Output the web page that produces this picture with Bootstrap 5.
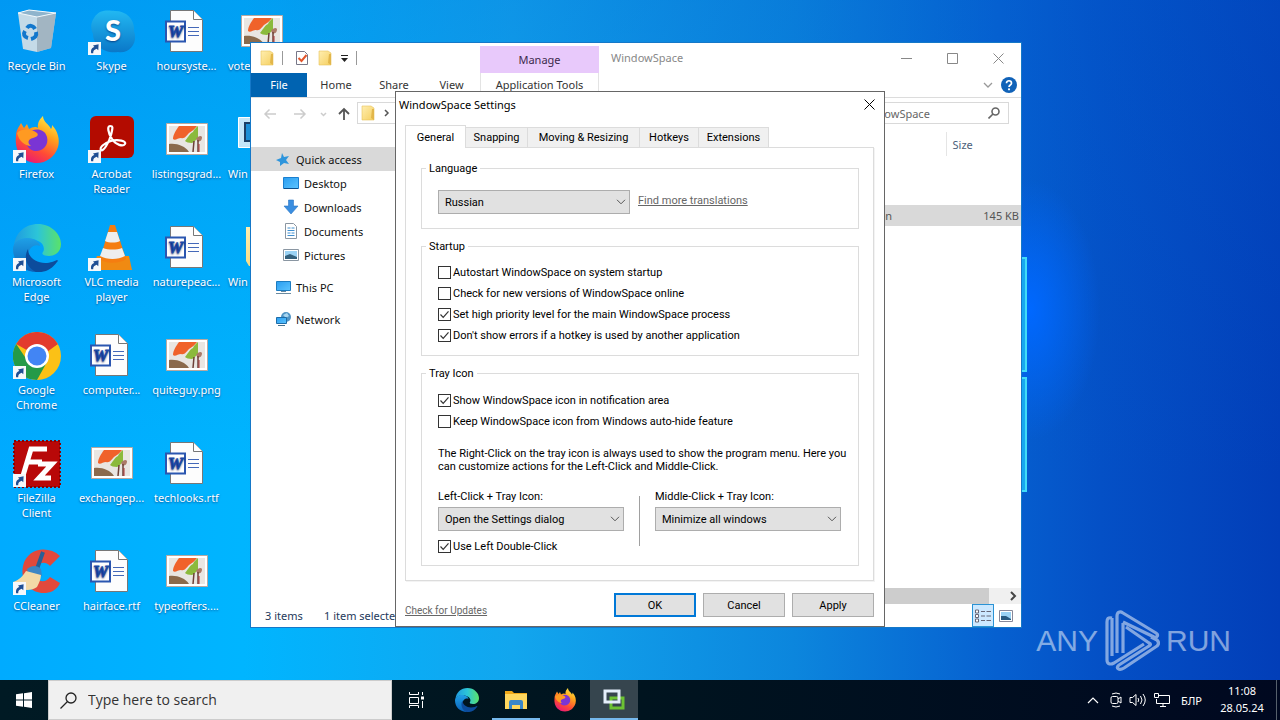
<!DOCTYPE html>
<html lang="en">
<head>
<meta charset="utf-8">
<meta name="viewport" content="width=device-width, initial-scale=1">
<title>WindowSpace Settings</title>
<link href="https://cdn.jsdelivr.net/npm/bootstrap@5.3.0/dist/css/bootstrap.min.css" rel="stylesheet">
<style>
:root{--ui:"Noto Sans","Open Sans",sans-serif;--dlg:Roboto,"Liberation Sans",sans-serif}
body{font:11px/15px var(--ui);color:#222;background:#0450c8;overflow:hidden}
svg{display:block;flex:none}
button{color:inherit}
.plain{background:none;border:0;padding:0}
.desktop{background:
  radial-gradient(ellipse 70px 130px at 1030px 310px,#0068ff 0,#0068ff00 100%),
  linear-gradient(180deg,#0060d040 0,#0060d000 70%),
  linear-gradient(90deg,#00abff 0,#00b5ff 19%,#12a6ee 40%,#0c86dd 62%,#0660d0 78%,#0450c6 86%,#023eb8 100%)}
/* desktop shortcuts */
.shortcuts{display:grid;grid-auto-flow:column;grid-template-rows:repeat(6,108px);grid-auto-columns:75px;width:max-content}
.shortcut{color:#fff;text-decoration:none;text-align:center;padding:8px 2px 0 0;white-space:nowrap;text-shadow:0 1px 2px #0048}
.shortcut svg{margin:0 auto 2px}
.shortcut.under{text-align:left;padding-left:3px}
.shortcut.under svg{margin-left:10px}
/* glowing panes of the wallpaper */
.panes{left:1000px;top:257px;width:27px}
.panes i{display:block;height:115px;margin-bottom:5px;background:#18a8f0;border:2px solid #40dcf8}
/* explorer */
.explorer{left:250px;top:42px;width:772px;height:586px;background:#fff;border:1px solid #1578c8}
.titlebar{height:30px;line-height:14px}
.quick{width:229px;gap:7px;padding-left:8px}
.vline{width:1px;height:14px;background:#999}
.manage{width:119px;background:#e8c9fb;margin-top:3px;color:#3c2a4c}
.ribbon{height:25px;border-bottom:1px solid #dcdcdc}
.ribbon a{color:#333;text-decoration:none;text-align:center;padding-top:4px}
.ribbon .file{background:#0063b1;color:#fff;width:56px}
.ribbon .tools{width:119px;border:solid #e3e3e3;border-width:0 1px}
.wbtn{width:46px;height:30px;display:flex;justify-content:center;align-items:center}
.field{height:22px;border:1px solid #d9d9d9;background:#fff}
.field input{border:0;outline:0;font:inherit;padding:0;width:140px;color:#666}
.field input::placeholder{color:#666;opacity:1}
.places{width:150px;flex:none}
.places a{height:24px;display:flex;align-items:center;color:#111;text-decoration:none;padding-left:32px;gap:5px}
.places a.first{background:#d9d9d9;padding-left:25px}
.places a.top-level{padding-left:24px;margin-top:8px;gap:4px}
.files{width:100%;margin-top:2px;color:#555}
.files th{font-weight:400;color:#4c607a;height:24px;border-right:1px solid #e5e5e5;padding:0 6px}
.files td{height:21px;padding:0 2px 0 6px}
.files .gap td{height:49px}
.files .picked{background:#d9d9d9}
.hscroll{height:16px;background:#f0f0f0}
.hscroll .thumb{background:#cdcdcd;width:588px}
.status{height:23px;padding:0 8px 0 14px;color:#1e395b;gap:5px}
.viewsel{width:22px;height:23px;background:#cce8ff;border:1px solid #2a93d5;display:flex;align-items:center;justify-content:center}
/* settings dialog */
.dialog{left:395px;top:91px;width:490px;height:536px;background:#fff;border:1px solid #666;font:11px/13px var(--dlg);color:#000;padding:0 10px 0 9px}
.caption{height:24px;margin:0 -5px 0 -6px;font:11px/15px var(--ui)}
.tabs{height:31px;align-items:flex-end}
.tabs button{background:#f0f0f0;border:1px solid #dcdcdc;border-width:1px 1px 0 0;height:20px;padding:0;white-space:nowrap;flex:none;text-align:center}
.tabs button.on{background:#fff;width:61px;height:23px;border-left-width:1px;margin-bottom:-1px;position:relative}
.pane{border:1px solid #dcdcdc;padding:14px 14px 14px 15px;box-shadow:1px 1px 0 #f3f3f3}
.group{border:1px solid #dcdcdc;margin:0 0 11px;padding:0 16px}
.group:last-child{margin:0}
.group legend{float:none;width:auto;font:inherit;margin:0 0 0 -12px;padding:0 3px}
.pick{height:24px;background:#e1e1e1 url("data:image/svg+xml,%3Csvg xmlns='http://www.w3.org/2000/svg' viewBox='0 0 10 6'%3E%3Cpath d='M1 .8l4 4 4-4' fill='none' stroke='%23555'/%3E%3C/svg%3E") no-repeat right 3px center/10px 6px;border:1px solid #adadad;border-radius:0;padding:0 6px;font:inherit;color:#000;appearance:none;width:186px}
.pick.wide{width:192px}
.tick{height:21px;display:flex;align-items:center;gap:2px;white-space:nowrap}
.tick input{appearance:none;width:13px;height:13px;border:1px solid #333;margin:0;background:#fff;flex:none}
.tick input:checked{background:#fff url("data:image/svg+xml,%3Csvg xmlns='http://www.w3.org/2000/svg' viewBox='0 0 11 11'%3E%3Cpath d='M1.5 5.5l2.7 2.8 5.3-6' fill='none' stroke='%23333' stroke-width='1.2'/%3E%3C/svg%3E")}
.soft{color:#666;text-decoration:underline}
.push{width:82px;height:24px;background:#e1e1e1;border:1px solid #adadad;padding:0}
.push.main{border:2px solid #0078d7}
.divider{width:1px;height:50px;background:#a0a0a0;margin:6px 15px 0}
/* watermark and taskbar */
.mark-any{right:49px;bottom:8px;color:#fff;opacity:.5;font:30px/62px "Liberation Sans",sans-serif;gap:6px}
.taskbar{height:40px;background:linear-gradient(90deg,#001a24,#00141f 50%,#000820);color:#fff}
.find{width:344px;background:#f0f0f0;border:1px solid #ccc;padding-left:11px;gap:11px}
.find input{background:none;border:0;outline:0;padding:0;width:250px;font:14px/20px "Open Sans",sans-serif;color:#333}
.find input::placeholder{color:#333;opacity:1}
.tb{width:48px;height:40px;display:flex;align-items:center;justify-content:center;flex:none}
.tb.open{box-shadow:inset 0 -2px #76b9ed}
.tb.on{background:#36454e}
.tray{gap:6px}
.clock{width:68px;text-align:center;line-height:17px;margin-top:-2px}
.peek{width:4px;border-left:1px solid #56606c}
</style>
</head>
<body class="vh-100 d-flex flex-column">
<svg width="0" height="0" class="position-absolute" aria-hidden="true">
  <defs>
    <linearGradient id="gEdge" x1="0" y1="0" x2="1" y2="0"><stop offset="0" stop-color="#1f9be0"/><stop offset=".5" stop-color="#2cc5d8"/><stop offset="1" stop-color="#5be268"/></linearGradient>
    <linearGradient id="gEdge2" x1="0" y1="0" x2="0" y2="1"><stop offset="0" stop-color="#1fa0e6"/><stop offset="1" stop-color="#0b60b8"/></linearGradient>
    <linearGradient id="gFox" x1=".8" y1="0" x2=".3" y2="1"><stop offset="0" stop-color="#fff04a"/><stop offset=".35" stop-color="#ffa41c"/><stop offset=".7" stop-color="#ff4a36"/><stop offset="1" stop-color="#e81878"/></linearGradient>
    <linearGradient id="gFold" x1="0" y1="0" x2="1" y2="1"><stop offset="0" stop-color="#ffeeb0"/><stop offset="1" stop-color="#f5cf60"/></linearGradient>
    <linearGradient id="gSky" x1="0" y1="0" x2="0" y2="1"><stop offset="0" stop-color="#22b8f2"/><stop offset="1" stop-color="#0a78c8"/></linearGradient>
    <linearGradient id="gScr" x1="0" y1="0" x2="1" y2="1"><stop offset="0" stop-color="#2a9df0"/><stop offset="1" stop-color="#5cc4ff"/></linearGradient>
  </defs>
  <symbol id="jump" viewBox="0 0 13 13"><path d="M0 0h13v13H0z" fill="#f5f8fb"/><path d="M3.2 11.200C2.500 7.500 4 5.500 6.400 5L5 3.400 10.600 2.200 10.300 8.200 8.600 6.800C6.500 7.600 5 8.600 5.200 11.200z" fill="#1f4f94"/></symbol>
  <symbol id="word" viewBox="0 0 48 48"><path d="M7.500 2.500h23l9 9v32h-32z" fill="#fdfdfd" stroke="#777"/><path d="M30.500 2.500v9h9" fill="#fff" stroke="#777"/><path d="M25 19.500h11M25 23.500h11M25 27.500h11" stroke="#4468b8"/><path d="M3 13.500h19v20H3z" fill="#fff" stroke="#2b56b0" stroke-width="2"/><text x="12.500" y="29" text-anchor="middle" font-family="Liberation Serif,serif" font-weight="700" font-style="italic" font-size="17" fill="#1c4aa8" stroke="#1c4aa8" stroke-width=".8">W</text></symbol>
  <symbol id="photo" viewBox="0 0 48 48"><path d="M3.500 7.500h41v31h-41z" fill="#fff" stroke="#b8a8a0"/><path d="M6 10h36v26H6z" fill="#e9e6e2"/><path d="M16 10h18c-2 3-5 5-8 7-3 3-4 6-8 5-3 0-6 3-8 1 0-4 3-9 6-13z" fill="#f0622a"/><path d="M35 10v12c-2 1-3 4-6 5-3 0-6-1-7-2 3-3 4-7 8-9 1-3 3-4 5-6z" fill="#8bba3c"/><path d="M6 28c8-1 16 2 20 8H6z" fill="#8b6a4c"/><path d="M33 23c2-3 5-4 6-2 0 4-2 4-4 5z" fill="#ab7a68"/><path d="M31 25l-1 11M35 24v12" stroke="#6d4038" stroke-width="1.500"/><path d="M36 28v8" stroke="#a33" /></symbol>
  <symbol id="edge" viewBox="0 0 48 48"><path d="M1 22C2 9 12 0 25 0c13 0 23 10 23 20 0 8-6 12-12 12-5 0-8-2-6-4 2-2 1-9-5-11C15 12 3 15 1 22z" fill="url(#gEdge)"/><path d="M0 25c0-7 7-11 14-11 8 0 13 5 13 8-6-3-13 3-12 12 1 7 5 11 9 14C10 48 0 38 0 25z" fill="url(#gEdge2)"/><path d="M23 48C14 44 10 34 15 25c0 8 8 14 17 14 6 0 9-2 12-3 1 0 1 1 0 2-5 7-12 11-21 10z" fill="#0c4c9c"/></symbol>
  <symbol id="fox" viewBox="0 0 48 48"><path d="M3 20C3 14 6 11 8 7l3 5 3-4 2 5c3-2 7-3 9-1C24 6 28 2 30 0c0 6 6 8 8 13 1-1 1-3 1-4 6 6 8 15 6 22-3 10-12 16-21 16C12 47 1 38 3 20z" fill="url(#gFox)"/><path d="M15 18c4-6 16-7 19 3 2 8-4 14-11 14-9 0-12-10-8-17z" fill="#7a35d4"/><path d="M4 17c5-5 15-4 20 0 2 2 0 4-4 5-5 1-6 5-2 8-6 0-12-5-14-13z" fill="#ff9a22"/></symbol>
  <symbol id="folder" viewBox="0 0 16 16"><path d="M2 1h9l3 2v12H2z" fill="url(#gFold)" stroke="#e8c35c" stroke-width=".6"/><path d="M12 4h2v11l-3-2z" fill="#e2b64a"/></symbol>
</svg>

<main class="desktop flex-grow-1 position-relative overflow-hidden">
  <nav class="shortcuts" aria-label="Desktop">
    <a class="shortcut" href="#"><svg width="48" height="48"><path d="M5 5l11-3 27 3-5 35-14 4-14-3z" fill="#cfdde6" opacity=".95"/><path d="M24 9v35l14-4 5-35z" fill="#9aabb9" opacity=".8"/><path d="M5 5l11-3 27 3-19 4z" fill="#8fb4cc" stroke="#f2f8fb"/><g fill="none" stroke="#1277cc" stroke-width="4"><path d="M14 20c2-3 6-3 8 1"/><path d="M23 24c1 4-1 6-5 7"/><path d="M15 30c-4-1-5-4-3-7"/></g></svg>Recycle Bin</a>
    <a class="shortcut" href="#"><svg width="48" height="48"><use href="#fox"/><use href="#jump" y="34" width="13" height="13"/></svg>Firefox</a>
    <a class="shortcut" href="#"><svg width="48" height="48"><use href="#edge"/><use href="#jump" y="34" width="13" height="13"/></svg>Microsoft<br>Edge</a>
    <a class="shortcut" href="#"><svg width="48" height="48"><circle cx="24" cy="24" r="24" fill="#fbc116"/><path d="M24 24L3.200 12A24 24 0 0 1 44.800 12z" fill="#e33b2e"/><path d="M3.200 12A24 24 0 0 0 24 48L34 30 14 28z" fill="#249a48"/><path d="M24 12h20.800L34 20z" fill="#e33b2e"/><circle cx="24" cy="24" r="12" fill="#fff"/><circle cx="24" cy="24" r="9.500" fill="#4285f4"/><use href="#jump" y="34" width="13" height="13"/></svg>Google<br>Chrome</a>
    <a class="shortcut" href="#"><svg width="48" height="48"><path d="M1 1h46v46H1z" fill="#b80808" stroke="#8a0000" stroke-width="2" stroke-dasharray="2 2"/><g fill="none" stroke="#fff" stroke-width="5"><path d="M34 9H18L9 39M14 22h15M25 24h14L26 38h12"/></g><use href="#jump" y="34" width="13" height="13"/></svg>FileZilla<br>Client</a>
    <a class="shortcut" href="#"><svg width="48" height="48"><path d="M47 8C35-3 14 0 10 18c-4 20 14 32 30 25 3-2 6-5 7-8l-10-6c-5 7-14 5-15-4 0-9 9-14 15-7z" fill="#e2493c"/><path d="M30 4l-6 17" stroke="#285f96" stroke-width="4"/><path d="M14 21c5-4 10-4 14 0l1 7-14-3z" fill="#3d86c4"/><path d="M13 23l15 4c0 4-2 8-4 12-4 3-10 4-16 2L0 34c6-2 10-6 13-11z" fill="#f3d9a6"/><use href="#jump" y="34" width="13" height="13"/></svg>CCleaner</a>
    <a class="shortcut" href="#"><svg width="48" height="48"><path d="M6 10C12 0 22 3 27 3c12 0 20 9 19 20 4 10-3 23-16 21C16 46 5 37 5 26 2 20 3 14 6 10z" fill="url(#gSky)"/><text x="25" y="33" text-anchor="middle" font-family="Lato,sans-serif" font-weight="900" font-size="29" fill="#fff">S</text><use href="#jump" y="34" width="13" height="13"/></svg>Skype</a>
    <a class="shortcut" href="#"><svg width="48" height="48"><rect x="2" y="0" width="44" height="42" rx="6" fill="#b30b00"/><path d="M22 10c-3 0-2 7 2 13s11 8 13 5-7-5-14-3-12 7-10 9 8-7 10-15 2-9-1-9z" fill="none" stroke="#fff" stroke-width="2.200"/><use href="#jump" y="34" width="13" height="13"/></svg>Acrobat<br>Reader</a>
    <a class="shortcut" href="#"><svg width="48" height="48"><path d="M9 32h32l3 14H4z" fill="#f08a12"/><path d="M22 1h5l11 34c-6 5-21 5-26 0z" fill="#f57d10"/><path d="M20 8h9l3 9c-4 2-11 2-15 0z" fill="#eee"/><path d="M15 24c5 2 14 2 19 0l3 8c-7 4-18 4-25 0z" fill="#eee"/><use href="#jump" y="34" width="13" height="13"/></svg>VLC media<br>player</a>
    <a class="shortcut" href="#"><svg width="48" height="48"><use href="#word"/></svg>computer...</a>
    <a class="shortcut" href="#"><svg width="48" height="48"><use href="#photo"/></svg>exchangep...</a>
    <a class="shortcut" href="#"><svg width="48" height="48"><use href="#word"/></svg>hairface.rtf</a>
    <a class="shortcut" href="#"><svg width="48" height="48"><use href="#word"/></svg>hoursyste...</a>
    <a class="shortcut" href="#"><svg width="48" height="48"><use href="#photo"/></svg>listingsgrad...</a>
    <a class="shortcut" href="#"><svg width="48" height="48"><use href="#word"/></svg>naturepeac...</a>
    <a class="shortcut" href="#"><svg width="48" height="48"><use href="#photo"/></svg>quiteguy.png</a>
    <a class="shortcut" href="#"><svg width="48" height="48"><use href="#word"/></svg>techlooks.rtf</a>
    <a class="shortcut" href="#"><svg width="48" height="48"><use href="#photo"/></svg>typeoffers....</a>
    <a class="shortcut under" href="#"><svg width="48" height="48"><use href="#photo"/></svg>vote</a>
    <a class="shortcut under" href="#"><svg width="48" height="48"><path d="M.5 1.500h40v30H.500z" fill="#c4e6f8" stroke="#fff"/><path d="M7 7h20v18H7z" fill="#1c8fd6" stroke="#1b3f66" stroke-width="2"/></svg>Win</a>
    <a class="shortcut under" href="#"><svg width="48" height="48"><path d="M8 3h28l6 5v34H11l-3-5z" fill="url(#gFold)"/></svg>Win</a>
  </nav>
  <div class="panes position-absolute" aria-hidden="true"><i></i><i></i></div>

  <section class="explorer position-absolute d-flex flex-column" aria-label="WindowSpace folder">
    <div class="titlebar d-flex">
      <div class="quick d-flex align-items-center">
        <svg width="16" height="16"><use href="#folder"/></svg><span class="vline"></span>
        <svg width="16" height="16" class="ms-1"><path d="M2.500 1.500h8l3 3v10h-11z" fill="#fff" stroke="#778"/><path d="M4.500 8l3 3 5-6" fill="none" stroke="#e2562c" stroke-width="2"/></svg>
        <svg width="16" height="16"><use href="#folder"/></svg>
        <svg width="9" height="9"><path d="M1 1.500h7" stroke="#222"/><path d="M1 4h7L4.500 8z" fill="#222"/></svg><span class="vline"></span>
      </div>
      <div class="manage d-flex align-items-center justify-content-center">Manage</div>
      <div class="d-flex align-items-center ps-2 flex-grow-1 ms-1" style="color:#888">WindowSpace</div>
      <button class="plain wbtn" aria-label="Minimize"><svg width="11" height="11"><path d="M0 5.500h11" stroke="#888"/></svg></button>
      <button class="plain wbtn" aria-label="Maximize"><svg width="11" height="11"><path d="M.5.500h10v10H.500z" fill="none" stroke="#888"/></svg></button>
      <button class="plain wbtn" aria-label="Close"><svg width="11" height="11"><path d="M.5.500l10 10m0-10l-10 10" stroke="#888"/></svg></button>
    </div>
    <div class="ribbon d-flex">
      <a class="file" href="#">File</a><a href="#" style="width:58px">Home</a><a href="#" style="width:58px">Share</a><a href="#" style="width:57px">View</a><a class="tools" href="#">Application Tools</a>
      <div class="ms-auto d-flex align-items-center gap-2 pe-1"><svg width="10" height="7"><path d="M1 1l4 4 4-4" fill="none" stroke="#999" stroke-width="1.300"/></svg>
      <svg width="16" height="16"><circle cx="8" cy="8" r="8" fill="#1062b8"/><path d="M5.500 6.200c0-3.300 5-3.200 5 0C10.500 8 8 8 8 10" fill="none" stroke="#fff" stroke-width="1.700"/><circle cx="8" cy="12.300" r="1.100" fill="#fff"/></svg></div>
    </div>
    <div class="d-flex align-items-center mt-1 pe-2 me-1">
      <svg width="106" height="20" fill="none" stroke-width="1.500"><g stroke="#ccc"><path d="M25 11H14m4.500-4.500L14 11l4.500 4.500"/><path d="M43 11h11m-4.500-4.500L54 11l-4.500 4.500"/><path d="M70 10l2.500 2.500L75 10"/></g><path d="M93 17V6m-5 5l5-5 5 5" stroke="#555" stroke-width="1.800"/></svg>
      <div class="field d-flex align-items-center gap-2" style="width:440px;padding-left:2px"><svg width="16" height="16"><use href="#folder"/></svg><svg width="6" height="8"><path d="M1 1l3 3-3 3" fill="none" stroke="#555" stroke-width="1.500"/></svg></div>
      <label class="field d-flex align-items-center justify-content-between ms-auto pe-2" style="width:206px;padding-left:16px"><input type="search" placeholder="Search WindowSpace" aria-label="Search folder"><svg width="12" height="12" fill="none" stroke="#666" stroke-width="1.600"><circle cx="7.500" cy="4.500" r="3.500"/><path d="M5 7L.500 11.500"/></svg></label>
    </div>
    <div class="d-flex flex-grow-1" style="padding-top:23px">
      <nav class="places" aria-label="Places">
        <a class="first" href="#"><svg width="15" height="15"><path d="M6 1l2 4 5-1-3 4 3 4-5-1-4 3 0-4-4-2 5-2z" fill="#2e95dc"/></svg>Quick access</a>
        <a href="#"><svg width="16" height="14"><path d="M.5 1.500h15v11H.500z" fill="url(#gScr)" stroke="#1a7fd0"/><path d="M1 12.500h14" stroke="#0c4f8c"/></svg>Desktop</a>
        <a href="#"><svg width="16" height="16"><path d="M5.500 1h5v6H15l-7 8-7-8h4.500z" fill="#3a8ee0" stroke="#2a76c4" stroke-width=".6"/></svg>Downloads</a>
        <a href="#"><svg width="16" height="16"><path d="M2.500.500h8l3 3v12h-11z" fill="#fff" stroke="#8a96a2"/><path d="M4.500 5h3m1 0h3M4.500 7.500h7m-7 2.500h3m1 0h3m-7 2.500h7" stroke="#3f8fd0"/></svg>Documents</a>
        <a href="#"><svg width="16" height="14"><path d="M.5 1.500h15v11H.500z" fill="#fff" stroke="#8a96a2"/><path d="M2 3h12v8H2z" fill="#9ad2f4"/><path d="M2 8l5-2 7 3v2H2z" fill="#33607c"/></svg>Pictures</a>
        <a class="top-level" href="#"><svg width="17" height="16"><path d="M1.500 2.500h14v9h-14z" fill="url(#gScr)" stroke="#1d7cc0"/><path d="M1 14.500h15M6 12.500h5" stroke="#6a8aa0"/></svg>This PC</a>
        <a class="top-level" href="#"><svg width="17" height="16"><circle cx="11" cy="6" r="5" fill="#4f93c4"/><path d="M8 4l4-2 2 3-3 2z" fill="#a9d5ee"/><path d="M1.500 6.500h10v6h-10z" fill="url(#gScr)" stroke="#1d6ca8"/><path d="M3 14.500h7" stroke="#48718c"/></svg>Network</a>
      </nav>
      <div class="flex-grow-1 d-flex flex-column justify-content-between" style="margin-top:-17px">
        <table class="files">
          <thead><tr><th style="width:350px">Name</th><th>Type</th><th style="width:75px;border:0">Size</th></tr></thead>
          <tbody><tr class="gap"><td></td><td></td><td></td></tr>
          <tr class="picked"><td>WindowSpace</td><td><div class="text-end pe-5 me-1">Application</div></td><td class="text-end">145 KB</td></tr></tbody>
        </table>
        <div class="hscroll d-flex align-items-center justify-content-between pe-1"><span class="thumb h-100"></span><svg width="8" height="10"><path d="M2 1l4 4-4 4" fill="none" stroke="#444" stroke-width="2"/></svg></div>
      </div>
    </div>
    <div class="status d-flex align-items-center"><span style="width:54px">3 items</span><span>1 item selected</span>
      <button class="plain viewsel ms-auto" aria-label="Details"><svg width="16" height="14"><path d="M.5 1h3v3h-3zm0 4.500h3v3h-3zM.5 10h3v3h-3z" fill="#fff" stroke="#667"/><path d="M6 2.500h4m1.500 0H16M6 7h4m1.500 0H16M6 11.500h4m1.500 0H16" stroke="#667"/></svg></button>
      <button class="plain" aria-label="Large icons"><svg width="14" height="12"><path d="M.5.500h13v11H.500z" fill="#fff" stroke="#889"/><path d="M2 2h10v8H2z" fill="#9ad2f4"/><path d="M2 6l5 0 5 3v1H2z" fill="#285a80"/></svg></button>
    </div>
  </section>

  <section class="dialog position-absolute" role="dialog" aria-label="WindowSpace Settings">
    <div class="caption d-flex align-items-center justify-content-between"><span>WindowSpace Settings</span><button class="plain px-1" aria-label="Close"><svg width="11" height="11"><path d="M.5.500l10 10m0-10l-10 10" stroke="#000"/></svg></button></div>
    <div class="tabs d-flex" role="tablist"><button class="on" role="tab">General</button><button role="tab" style="width:62px">Snapping</button><button role="tab" style="width:112px">Moving &amp; Resizing</button><button role="tab" style="width:59px">Hotkeys</button><button role="tab" style="width:70px">Extensions</button></div>
    <div class="pane">
      <fieldset class="group"><legend>Language</legend>
        <div class="d-flex gap-2" style="padding:15px 0 14px"><select class="pick wide" aria-label="Language"><option>Russian</option></select><a class="soft pt-1" href="#">Find more translations</a></div>
      </fieldset>
      <fieldset class="group"><legend>Startup</legend>
        <div style="padding:9px 0">
          <label class="tick"><input type="checkbox">Autostart WindowSpace on system startup</label>
          <label class="tick"><input type="checkbox">Check for new versions of WindowSpace online</label>
          <label class="tick"><input type="checkbox" checked>Set high priority level for the main WindowSpace process</label>
          <label class="tick"><input type="checkbox" checked>Don't show errors if a hotkey is used by another application</label>
        </div>
      </fieldset>
      <fieldset class="group"><legend>Tray Icon</legend>
        <div style="padding:10px 0 8px">
          <label class="tick"><input type="checkbox" checked>Show WindowSpace icon in notification area</label>
          <label class="tick"><input type="checkbox">Keep WindowSpace icon from Windows auto-hide feature</label>
          <p class="text-nowrap" style="margin:15px 0 17px">The Right-Click on the tray icon is always used to show the program menu. Here you<br>can customize actions for the Left-Click and Middle-Click.</p>
          <div class="d-flex">
            <div><label class="d-block mb-1" for="lc">Left-Click + Tray Icon:</label><select id="lc" class="pick d-block"><option>Open the Settings dialog</option></select><label class="tick" style="margin-top:5px"><input type="checkbox" checked>Use Left Double-Click</label></div>
            <div class="divider"></div>
            <div><label class="d-block mb-1" for="mc">Middle-Click + Tray Icon:</label><select id="mc" class="pick d-block"><option>Minimize all windows</option></select></div>
          </div>
        </div>
      </fieldset>
    </div>
    <div class="d-flex justify-content-end" style="gap:7px;padding-top:12px"><a class="soft me-auto align-self-end" style="font-size:10px" href="#">Check for Updates</a><button class="push main">OK</button><button class="push">Cancel</button><button class="push">Apply</button></div>
  </section>

  <div class="mark-any position-absolute d-flex align-items-center"><span>ANY</span>
    <svg width="56" height="62" viewBox="0 0 56 62" fill="none" stroke="#fff" stroke-width="3.200" stroke-linejoin="round"><path d="M8 8C4 7 3 9 3 12v38c0 4 3 5 7 3l30-19"/><path d="M8 8v38"/><path d="M13 43V6c0-4 3-5 6-3l33 20c3 2 1 5-2 4L19 12"/><path d="M19 13v30"/><path d="M47 27l6 3c2 2 2 4 0 6L20 58c-5 3-9 0-5-3l30-19c2-1 2-2 0-3L22 17"/></svg>
    <span>RUN</span></div>
</main>

<footer class="taskbar d-flex flex-shrink-0 align-items-stretch">
  <button class="plain tb" aria-label="Start"><svg width="16" height="16" fill="#fff"><path d="M0 2.300l7-1v6.200H0zM8 1.200L16 0v7.500H8zM0 8.500h7v6.200l-7-1zM8 8.500h8V16l-8-1.200z"/></svg></button>
  <label class="find d-flex align-items-center"><svg width="17" height="17" fill="none" stroke="#222" stroke-width="1.300"><circle cx="11" cy="6" r="5"/><path d="M7.500 9.500L.500 16.500"/></svg><input type="text" placeholder="Type here to search" aria-label="Search"></label>
  <button class="plain tb" aria-label="Task view"><svg width="17" height="16" fill="none" stroke="#fff"><path d="M1.500 0v2.500h9V0M1.500 5.500h9v6h-9zM1.500 16v-2.500h9V16M14.500 0v3m0 6v7"/><path d="M13 4.500h3v3h-3z" fill="#fff" stroke="none"/></svg></button>
  <div class="d-flex" style="gap:1px;padding-left:3px">
    <button class="plain tb" aria-label="Edge"><svg width="24" height="24" viewBox="0 0 48 48"><use href="#edge"/></svg></button>
    <button class="plain tb open" aria-label="File Explorer"><svg width="24" height="22"><path d="M1 2h7l2 2h13v16H1z" fill="#f0a818"/><path d="M1 5h22v15H1z" fill="#ffd75e"/><path d="M5 20v-7q0-2 2-2h10q2 0 2 2v7h-3v-4H8v4z" fill="#3a86c8"/></svg></button>
    <button class="plain tb" aria-label="Firefox"><svg width="24" height="24" viewBox="0 0 48 48"><use href="#fox"/></svg></button>
    <button class="plain tb on open" aria-label="WindowSpace"><svg width="24" height="24" fill="none"><path d="M9 10h12v10H9z" stroke="#6cc233" stroke-width="3"/><path d="M3 3h14v11H3z" stroke="#e4eefa" stroke-width="3"/></svg></button>
  </div>
  <div class="tray ms-auto d-flex align-items-center">
    <svg width="12" height="8" fill="none" stroke="#fff" stroke-width="1.200"><path d="M1 7l5-5 5 5"/></svg>
    <svg width="14" height="16" fill="none" stroke="#fff" class="ms-1"><rect x="2" y="4.500" width="7" height="7" rx="1.500"/><path d="M9 7l3-2v6l-3-2M3 2q4-2 8 0M3 14q4 2 8 0"/></svg>
    <svg width="18" height="16" fill="none" stroke="#fff"><path d="M1 5.500h2.500L7 2.500v11l-3.500-3H1zM9 6q1.500 2 0 4M11.500 4q3 4 0 8M14 2q4.500 6 0 12"/></svg>
    <svg width="18" height="16" fill="none" stroke="#fff"><path d="M6 3.500h10.500v8H3.500V7M7 14.500h6M10 12v2"/><path d="M1.500 1.500h4v4h-4z"/></svg>
    <span class="ms-1">БЛР</span>
    <div class="clock">11:08<br>28.05.24</div>
  </div>
  <span class="peek"></span>
</footer>
<script src="https://cdn.jsdelivr.net/npm/bootstrap@5.3.0/dist/js/bootstrap.bundle.min.js"></script>
</body>
</html>
